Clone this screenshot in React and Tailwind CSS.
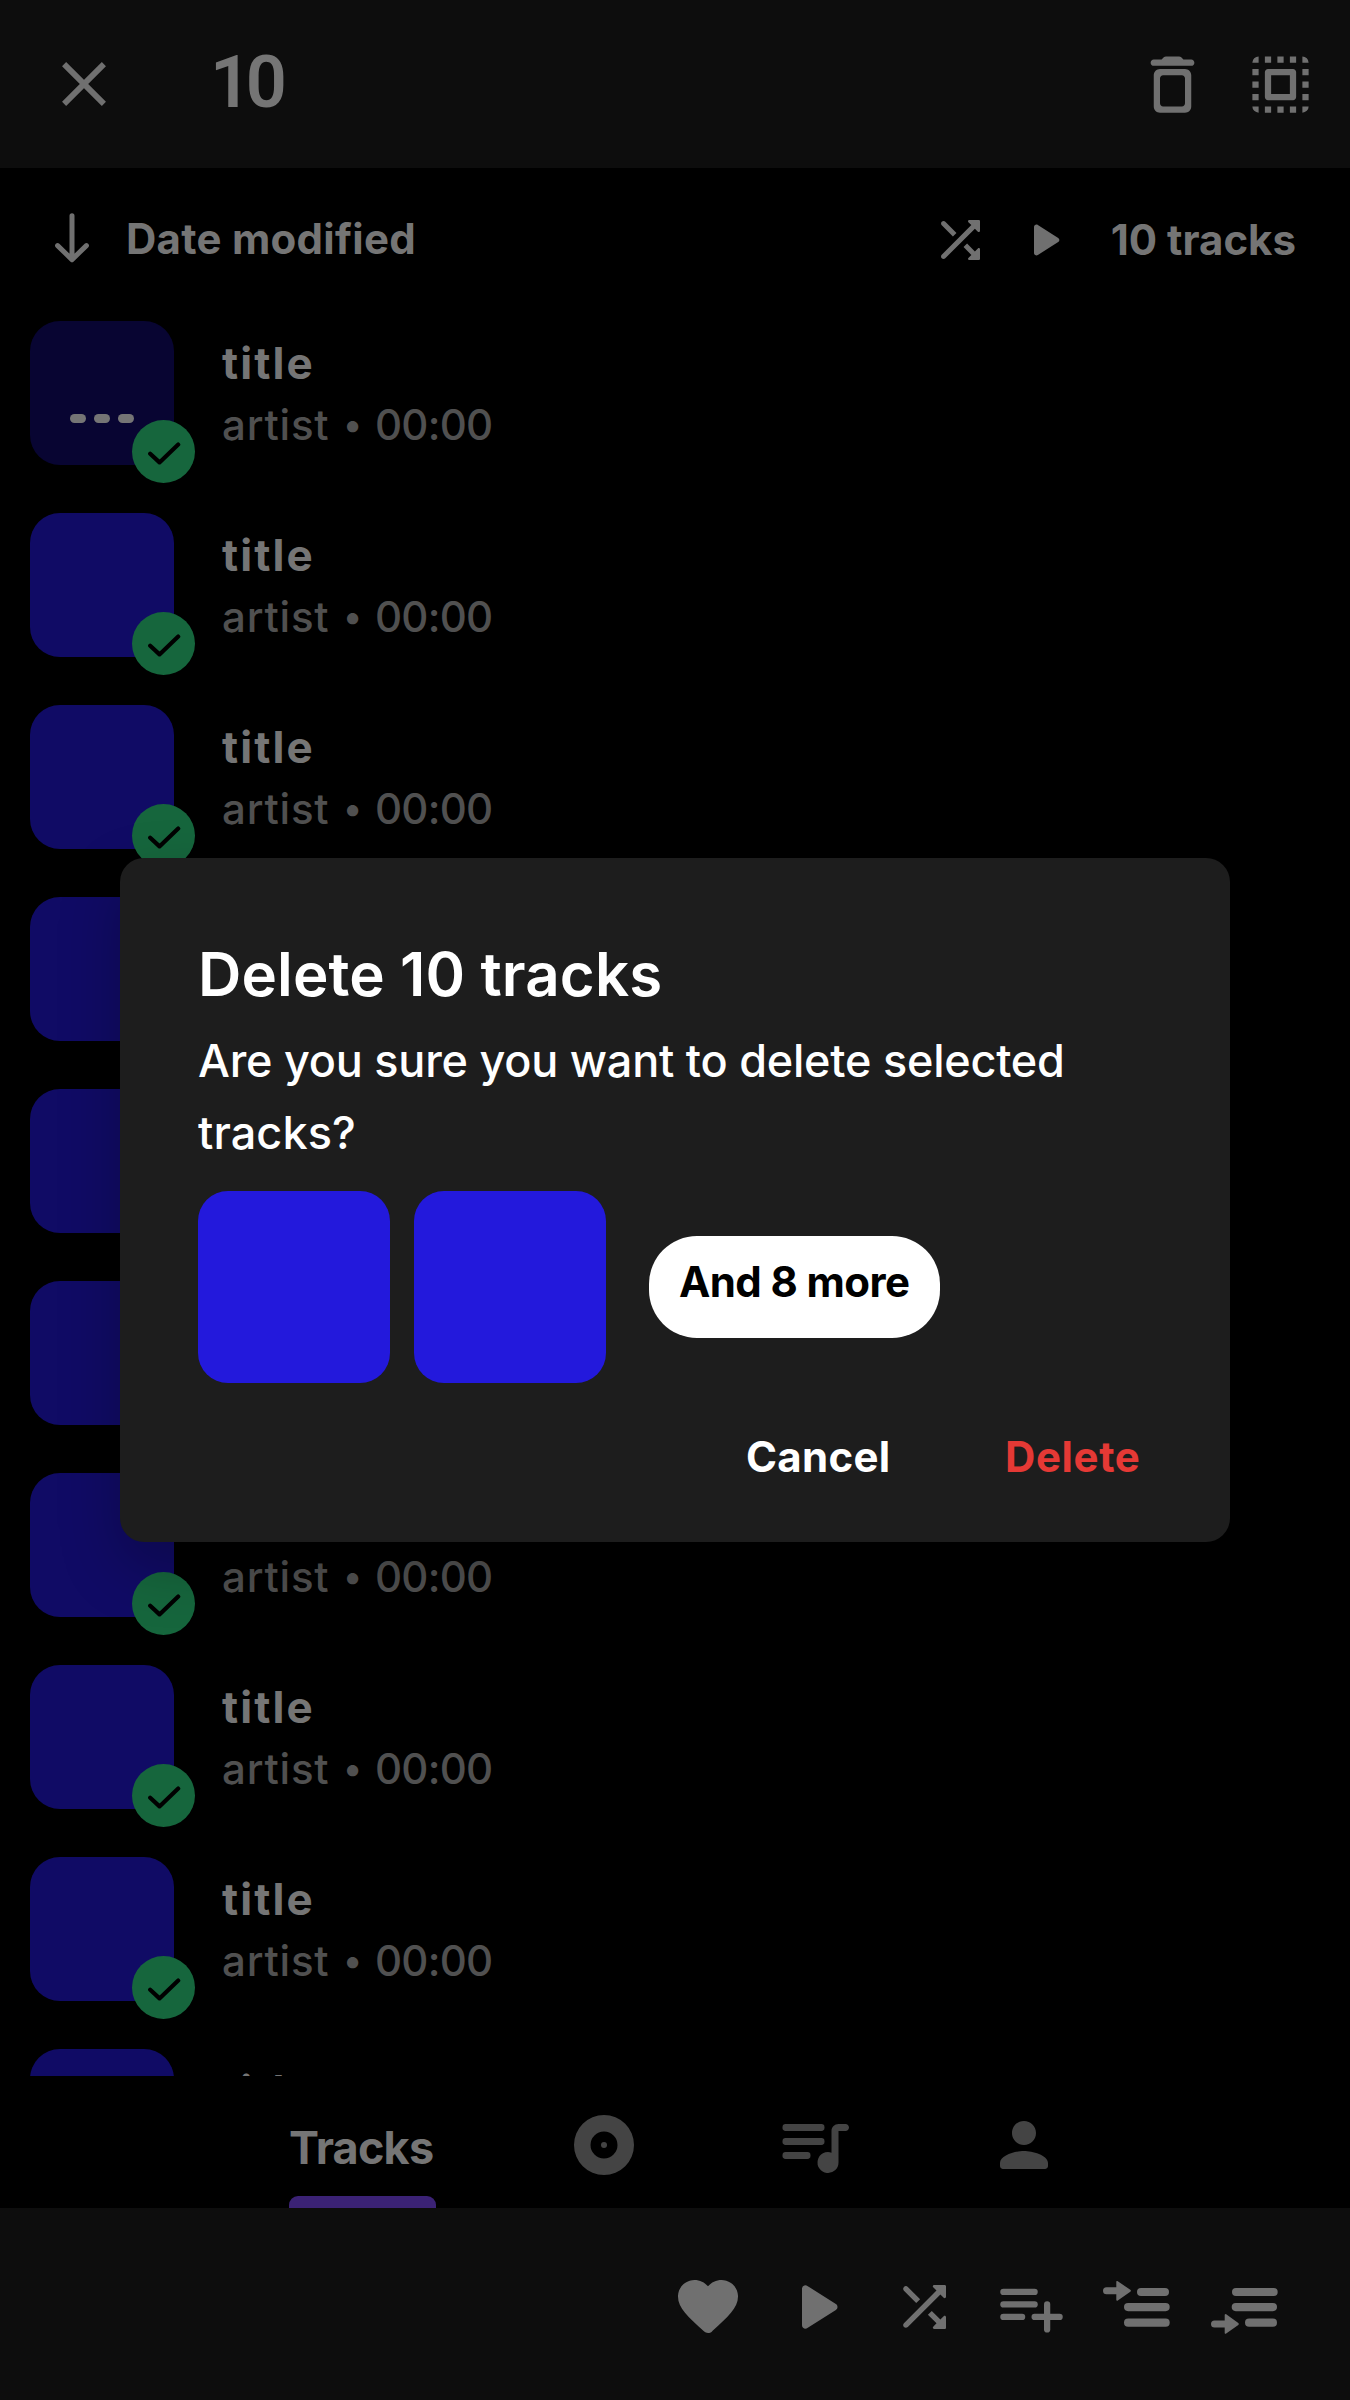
function Icon({ className, children }) {
  return (
    <svg viewBox="0 0 24 24" fill="currentColor" className={`shrink-0 ${className}`} aria-hidden="true">
      {children}
    </svg>
  );
}

function CloseIcon() {
  return (
    <svg viewBox="0 0 44 44" fill="none" stroke="currentColor" strokeWidth="5.8" className="h-[44px] w-[44px] shrink-0">
      <path d="M2.1 2.1 41.9 41.9M41.9 2.1 2.1 41.9" />
    </svg>
  );
}

function TrashIcon() {
  return (
    <Icon className="h-[75px] w-[75px]">
      <path d="M6 19c0 1.1.9 2 2 2h8c1.1 0 2-.9 2-2V9c0-1.1-.9-2-2-2H8c-1.1 0-2 .9-2 2v10zM9 9h6c.55 0 1 .45 1 1v8c0 .55-.45 1-1 1H9c-.55 0-1-.45-1-1v-8c0-.55.45-1 1-1zm6.5-5-.71-.71c-.18-.18-.44-.29-.7-.29H9.91c-.26 0-.52.11-.7.29L8.5 4H6c-.55 0-1 .45-1 1s.45 1 1 1h12c.55 0 1-.45 1-1s-.45-1-1-1h-2.5z" />
    </Icon>
  );
}

function SelectAllIcon() {
  return (
    <Icon className="h-[75px] w-[75px]">
      <path d="M3 5a2 2 0 0 1 2-2v2zM19 3a2 2 0 0 1 2 2h-2zM21 19a2 2 0 0 1-2 2v-2zM5 21a2 2 0 0 1-2-2h2z" />
      <path d="M7 3h2v2H7zM11 3h2v2h-2zM15 3h2v2h-2zM7 19h2v2H7zM11 19h2v2h-2zM15 19h2v2h-2zM3 7h2v2H3zM3 11h2v2H3zM3 15h2v2H3zM19 7h2v2h-2zM19 11h2v2h-2zM19 15h2v2h-2z" />
      <path d="M8 17h8c.55 0 1-.45 1-1V8c0-.55-.45-1-1-1H8c-.55 0-1 .45-1 1v8c0 .55.45 1 1 1zm1-8h6v6H9z" />
    </Icon>
  );
}

function ShuffleIcon({ className }) {
  return (
    <Icon className={className}>
      <path d="M10.59 9.17 6.12 4.7c-.39-.39-1.02-.39-1.41 0-.39.39-.39 1.02 0 1.41l4.46 4.46 1.42-1.4zm4.76-4.32 1.19 1.19L4.7 17.88c-.39.39-.39 1.02 0 1.41.39.39 1.02.39 1.41 0L17.96 7.46l1.19 1.19c.31.31.85.09.85-.36V4.5c0-.28-.22-.5-.5-.5h-3.79c-.45 0-.67.54-.36.85zm-.52 8.56-1.41 1.41 3.13 3.13-1.2 1.2c-.31.31-.09.85.36.85h3.79c.28 0 .5-.22.5-.5v-3.79c0-.45-.54-.67-.85-.35l-1.19 1.19-3.13-3.14z" />
    </Icon>
  );
}

function PlayIcon({ className }) {
  return (
    <Icon className={className}>
      <path d="M8 6.82v10.36c0 .79.87 1.27 1.54.84l8.14-5.18c.62-.39.62-1.29 0-1.69L9.54 5.98C8.87 5.55 8 6.03 8 6.82z" />
    </Icon>
  );
}

function ArrowDownIcon() {
  return (
    <svg viewBox="0 0 36 50" fill="none" stroke="currentColor" strokeWidth="5" strokeLinecap="round" strokeLinejoin="round" className="h-[50px] w-[36px] shrink-0">
      <path d="M18 2.7V46M3.6 32.6 18 46.6 32.4 32.6" />
    </svg>
  );
}

function HeartIcon() {
  return (
    <Icon className="h-[72px] w-[72px]">
      <path d="M13.35 20.13c-.76.69-1.93.69-2.69-.01l-.11-.1C5.3 15.27 1.87 12.16 2 8.28c.06-1.7.93-3.33 2.34-4.29 2.64-1.8 5.9-.96 7.66 1.1 1.76-2.06 5.02-2.91 7.66-1.1 1.41.96 2.28 2.59 2.34 4.29.14 3.88-3.3 6.99-8.55 11.76l-.1.09z" />
    </Icon>
  );
}

function PlaylistAddIcon() {
  return (
    <Icon className="ml-[37.75px] h-[75px] w-[75px]">
      <rect x="2" y="6" width="12" height="2" rx="1" />
      <rect x="2" y="10" width="12" height="2" rx="1" />
      <rect x="2" y="14" width="8" height="2" rx="1" />
      <rect x="12" y="14" width="10" height="2" rx="1" />
      <rect x="16" y="10" width="2" height="10" rx="1" />
    </Icon>
  );
}

function PlayNextIcon() {
  return (
    <svg viewBox="0 0 72 72" fill="currentColor" className="ml-[31.75px] h-[72px] w-[72px] shrink-0">
      <rect x="2" y="16.3" width="20" height="7" rx="3.5" />
      <path d="M15.3 10.9v17.9a.9.9 0 0 0 1.5.7l12.5-8.7a1.3 1.3 0 0 0 0-2L16.8 10.2a.9.9 0 0 0-1.5.7z" />
      <rect x="36" y="17" width="32" height="8" rx="4" />
      <rect x="23" y="32" width="45.7" height="8.2" rx="4.1" />
      <rect x="23" y="47.6" width="45.7" height="8.2" rx="4.1" />
    </svg>
  );
}

function AddToQueueIcon() {
  return (
    <svg viewBox="0 0 72 72" fill="currentColor" className="ml-[36px] h-[72px] w-[72px] shrink-0">
      <rect x="23" y="17" width="45.7" height="8" rx="4" />
      <rect x="22.7" y="32" width="45.3" height="8.2" rx="4.1" />
      <rect x="36" y="47.6" width="32" height="8.2" rx="4.1" />
      <rect x="2" y="49.4" width="20" height="7" rx="3.5" />
      <path d="M15.7 44v17.9a.9.9 0 0 0 1.5.7l12.1-8.7a1.3 1.3 0 0 0 0-2L17.2 43.3a.9.9 0 0 0-1.5.7z" />
    </svg>
  );
}

function AlbumIcon() {
  return (
    <Icon className="ml-[132px] h-[72px] w-[72px]">
      <path fillRule="evenodd" d="M12 2a10 10 0 1 0 0 20 10 10 0 0 0 0-20zm0 5.5a4.5 4.5 0 1 1 0 9 4.5 4.5 0 0 1 0-9z" />
      <circle cx="12" cy="12" r="1" />
    </Icon>
  );
}

function QueueMusicIcon() {
  return (
    <Icon className="ml-[132px] h-[84px] w-[84px]">
      <rect x="3" y="6" width="12" height="2" rx=".9" />
      <rect x="3" y="10" width="12" height="2" rx=".9" />
      <rect x="3" y="14" width="8" height="2" rx=".9" />
      <path d="M17 14.18V8c0-1.1.9-2 2-2h2c.55 0 1 .45 1 1s-.45 1-1 1h-2v9a3 3 0 1 1-2-2.82z" />
    </Icon>
  );
}

function PersonIcon() {
  return (
    <Icon className="ml-[132px] h-[72px] w-[72px]">
      <path d="M12 12c2.21 0 4-1.79 4-4s-1.79-4-4-4-4 1.79-4 4 1.79 4 4 4zm0 2c-2.67 0-8 1.34-8 4v1c0 .55.45 1 1 1h14c.55 0 1-.45 1-1v-1c0-2.66-5.33-4-8-4z" />
    </Icon>
  );
}

function Artwork({ current }) {
  return (
    <div className={`relative mt-3 flex h-36 w-36 shrink-0 items-end justify-center gap-[8.5px] rounded-[30px] pb-[42px] ${current ? "bg-[#080532]" : "bg-[#100b65]"}`}>
      {current && [0, 1, 2].map((dot) => <span key={dot} className="h-[9px] w-[15.5px] rounded-full bg-[#757575]" />)}
      <span className="absolute -right-[21px] -bottom-[18px] flex h-[63px] w-[63px] items-center justify-center rounded-full bg-[#16663d]">
        <svg viewBox="0 0 36 26" fill="none" stroke="black" strokeWidth="4.2" strokeLinecap="round" strokeLinejoin="round" className="h-[26px] w-[36px]">
          <path d="M4.2 14.7 13.5 23.4 32.2 5.6" />
        </svg>
      </span>
    </div>
  );
}

function TrackRow({ current }) {
  return (
    <li className="flex h-48 shrink-0 items-start pl-[30px]">
      <Artwork current={current} />
      <div className="ml-12 pt-6">
        <p className="text-[44px] leading-[61px] font-bold tracking-[2.1px] text-[#757575]">title</p>
        <p className="flex text-[42px] leading-[61px] font-medium text-[#505050]">
          <span className="w-[113px] tracking-[0.8px]">artist</span>
          <span className="w-[35px] text-center text-[36px]">•</span>
          <span className="ml-[5px] tracking-[-0.75px]">00:00</span>
        </p>
      </div>
    </li>
  );
}

function DeleteDialog() {
  return (
    <div className="absolute inset-0 flex items-center justify-center">
      <div role="dialog" className="h-[684px] w-[1110px] rounded-[24px] bg-[#1d1d1d] px-[78px] pt-20 whitespace-nowrap text-white shadow-[0_24px_60px_rgba(0,0,0,0.25)]">
        <h2 className="text-[60px] leading-[72px] font-semibold tracking-[0.13px]">Delete 10 tracks</h2>
        <p className="mt-[15px] text-[45px] leading-[72px] font-medium tracking-[-0.23px]">
          Are you sure you want to delete selected
          <br />
          <span className="tracking-[0.1px]">tracks?</span>
        </p>
        <div className="mt-[22px] flex items-center gap-6">
          <div className="h-48 w-48 rounded-[30px] bg-[#2319dc]" />
          <div className="h-48 w-48 rounded-[30px] bg-[#2319dc]" />
          <div className="ml-[19px] flex h-[102px] w-[291px] items-center rounded-[48px] bg-white pb-[12px] pl-[30px] text-[42px] font-bold tracking-[-0.6px] text-black">
            And 8 more
          </div>
        </div>
        <div className="mt-[38px] flex pl-[548px] text-[42px] leading-[72px] font-bold">
          <button className="w-[259px] text-left tracking-[0.3px]">Cancel</button>
          <button className="text-left tracking-[0.6px] text-[#e53935]">Delete</button>
        </div>
      </div>
    </div>
  );
}

export default function App() {
  return (
    <div className="relative flex h-[2400px] w-[1350px] flex-col overflow-hidden bg-black font-['Inter',sans-serif] text-[#707070]">
      <header className="flex h-[168px] shrink-0 items-center bg-[#0d0d0d] pl-[62px]">
        <CloseIcon />
        <h1 className="ml-[104px] pb-[3px] font-['Roboto',sans-serif] text-[72px] leading-none font-semibold tracking-[-5.5px] text-[#757575]">10</h1>
        <div className="ml-auto flex gap-[33px] pr-[32px]">
          <TrashIcon />
          <SelectAllIcon />
        </div>
      </header>

      <div className="flex h-[141px] shrink-0 items-center pr-[54px] pb-px pl-[54px]">
        <ArrowDownIcon />
        <span className="ml-9 pt-px text-[42px] font-bold tracking-[0.26px] text-[#757575]">Date modified</span>
        <div className="ml-auto flex items-center pt-[3px]">
          <ShuffleIcon className="h-[60px] w-[60px]" />
          <PlayIcon className="ml-6 h-[60px] w-[60px]" />
          <span className="ml-[37px] text-[42px] font-bold text-[#757575]">10 tracks</span>
        </div>
      </div>

      <ul className="flex min-h-0 flex-1 flex-col overflow-hidden">
        {Array.from({ length: 10 }, (_, i) => (
          <TrackRow key={i} current={i === 0} />
        ))}
      </ul>

      <nav className="flex h-[132px] shrink-0 items-center pl-[289px] text-[#444444]">
        <div className="flex h-full w-[147px] flex-col justify-end">
          <span className="mb-[20px] text-[45px] leading-[57px] font-bold tracking-[-0.8px] text-[#757575]">Tracks</span>
          <span className="h-3 shrink-0 rounded-t-[9px] bg-[#3b2275]" />
        </div>
        <div className="flex items-center pt-[6px]">
          <AlbumIcon />
          <QueueMusicIcon />
          <PersonIcon />
        </div>
      </nav>

      <footer className="flex h-48 shrink-0 items-center justify-end bg-[#0d0d0d] pt-[6px] pr-[69px]">
        <HeartIcon />
        <PlayIcon className="ml-[30px] h-[84px] w-[84px]" />
        <ShuffleIcon className="ml-[32.5px] h-[66px] w-[66px]" />
        <PlaylistAddIcon />
        <PlayNextIcon />
        <AddToQueueIcon />
      </footer>

      <DeleteDialog />
    </div>
  );
}
